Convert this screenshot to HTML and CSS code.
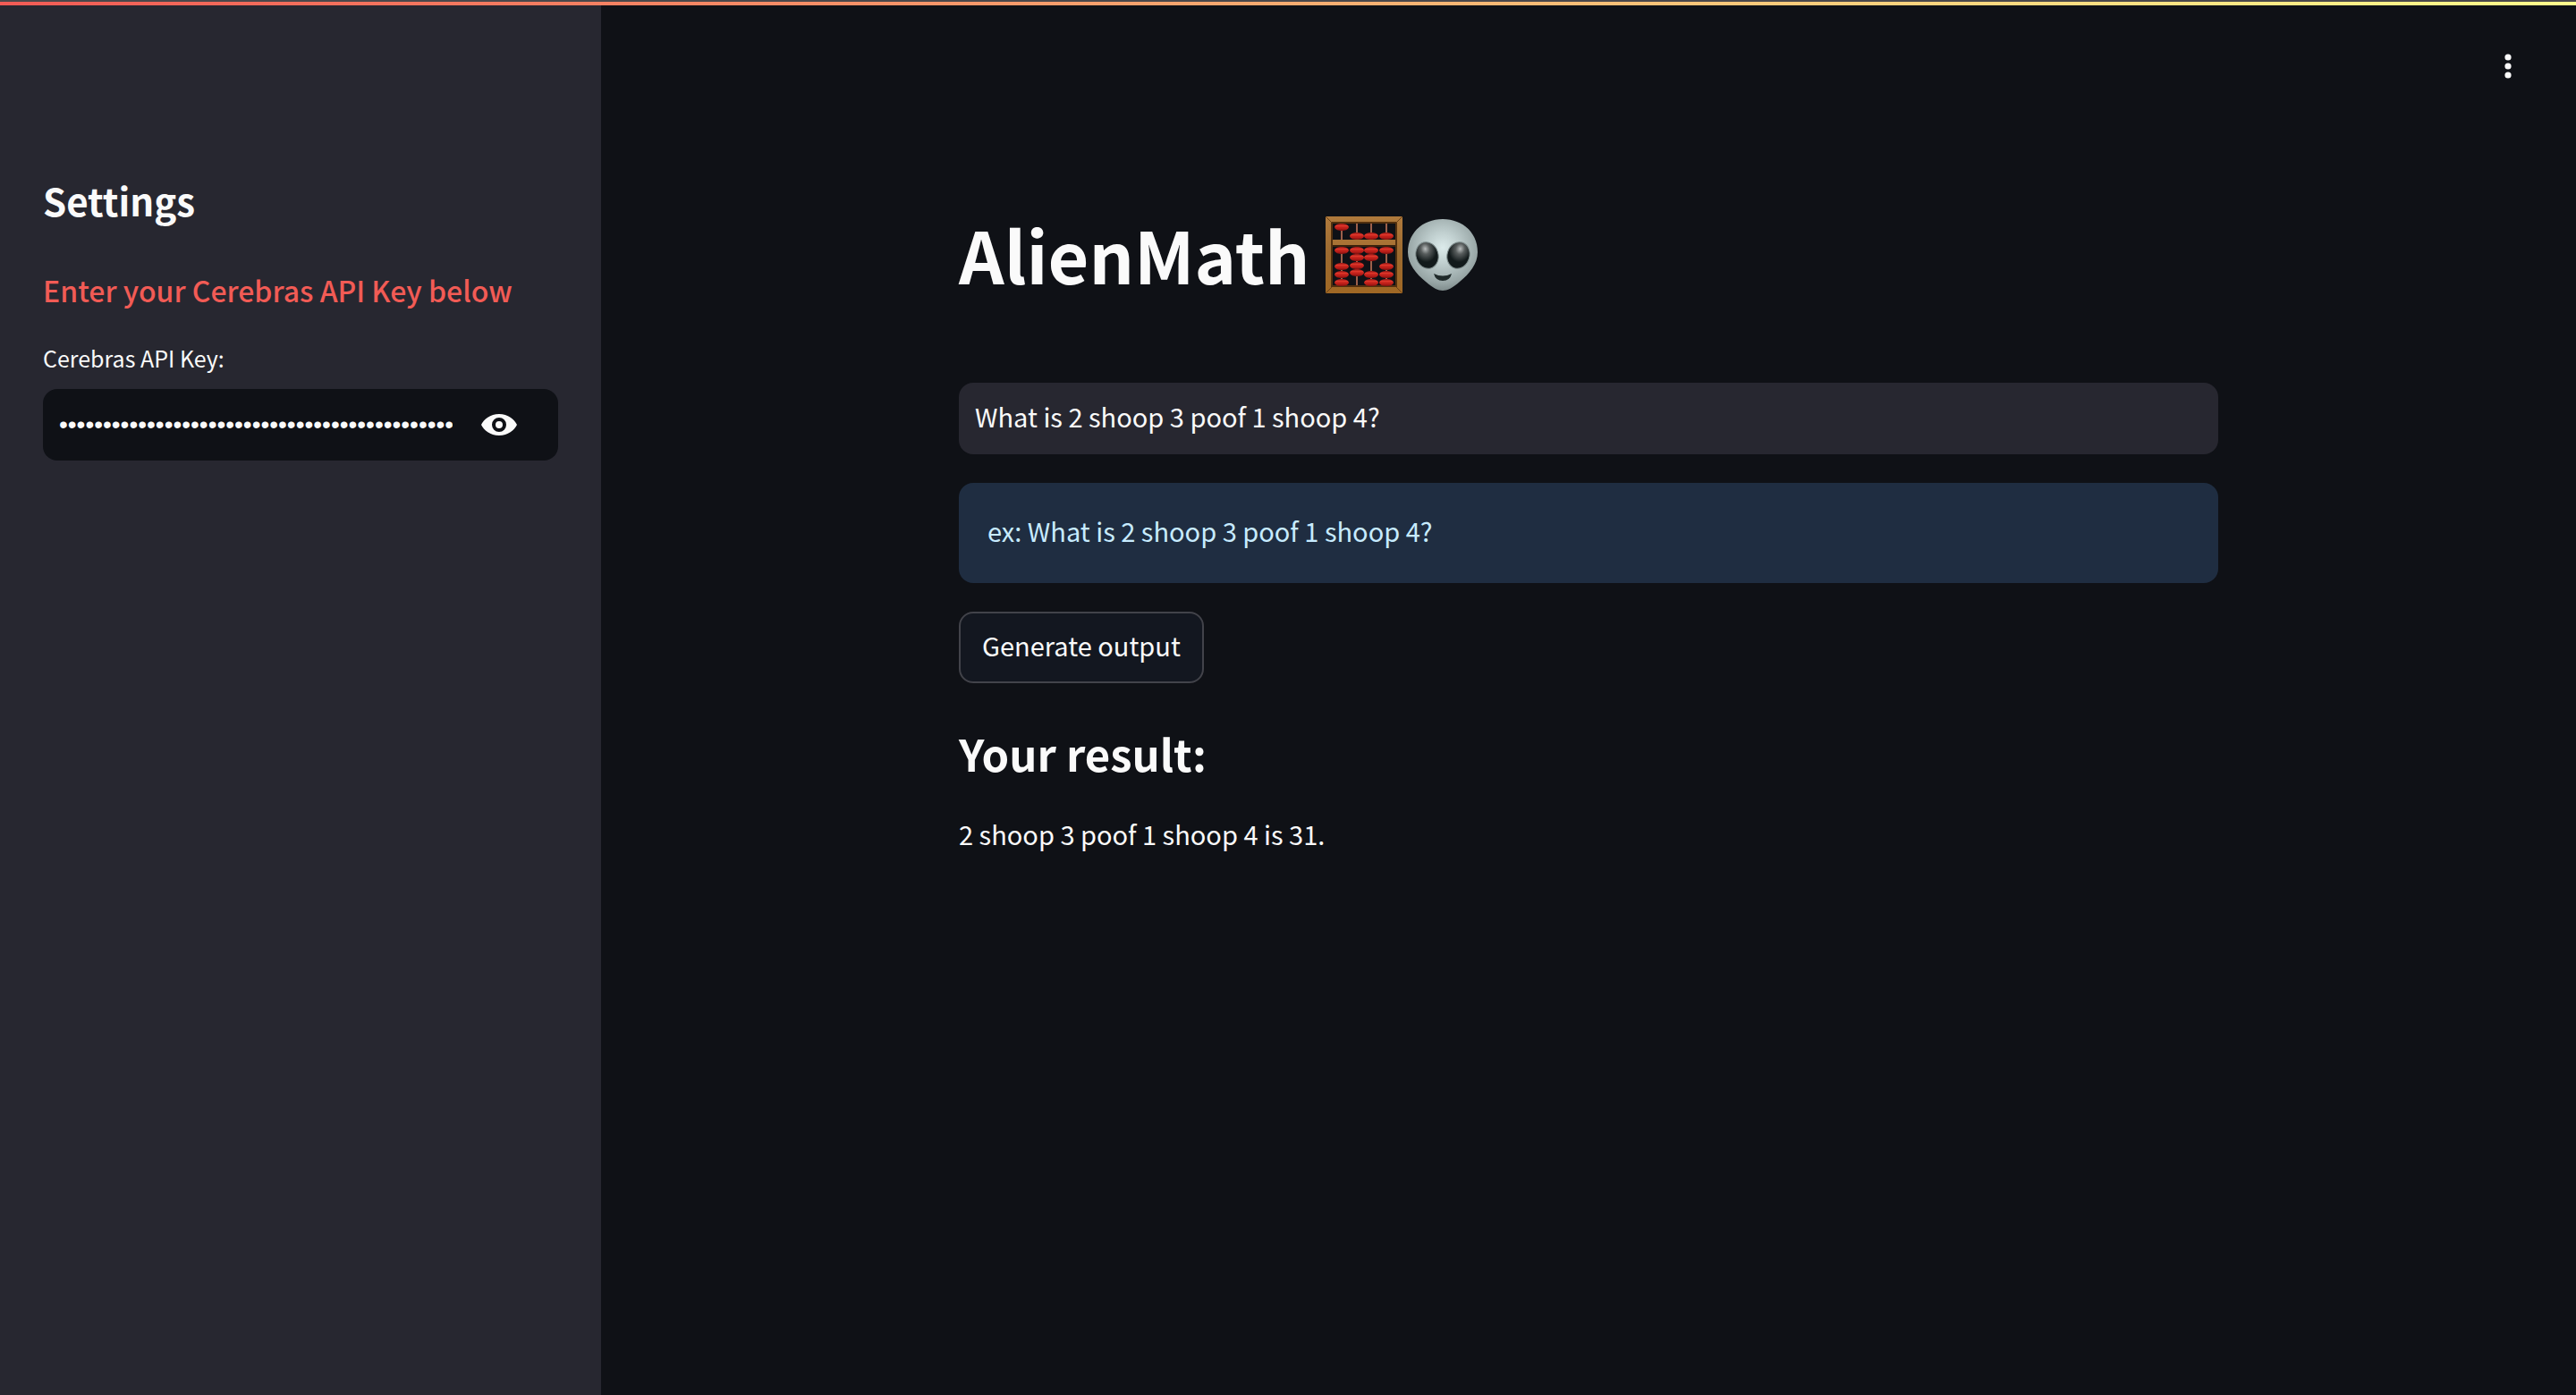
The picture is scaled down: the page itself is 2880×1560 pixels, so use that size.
FILE: index.html
```html
<!DOCTYPE html>
<html lang="en">
<head>
  <meta charset="utf-8">
  <meta name="viewport" content="width=device-width, initial-scale=1">
  <title>AlienMath</title>
  <link rel="stylesheet" href="styles.css">
</head>
<body>
  <div class="decoration"></div>
  <div class="app">
    <aside class="sidebar">
      <h2 class="sidebar-title">Settings</h2>
      <h3 class="sidebar-note">Enter your Cerebras API Key below</h3>
      <label class="label" for="api-key">Cerebras API Key:</label>
      <div class="key-field">
        <input class="key-input" id="api-key" type="password" value="0123456789012345678901234567890123456789012345678901">
        <button class="icon-button" type="button" aria-label="Show password text">
          <svg class="eye" viewBox="0 0 40 24" aria-hidden="true">
            <path fill="currentColor" fill-rule="evenodd" d="M20 0C30 0 37 6 40 12C37 18 30 24 20 24S3 18 0 12C3 6 10 0 20 0ZM20 4A8 8 0 1 0 20 20A8 8 0 1 0 20 4ZM20 8A4 4 0 1 1 20 16A4 4 0 1 1 20 8Z"/>
          </svg>
        </button>
      </div>
    </aside>
    <div class="main">
      <header class="toolbar">
        <button class="icon-button" type="button" aria-label="Main menu">
          <svg class="dots" viewBox="0 0 8 28" aria-hidden="true">
            <g fill="currentColor"><circle cx="4" cy="4" r="3.6"/><circle cx="4" cy="14" r="3.6"/><circle cx="4" cy="24" r="3.6"/></g>
          </svg>
        </button>
      </header>
      <main class="content">
        <h1 class="title">
          <span>AlienMath</span>
          <span class="emojis">
            <svg class="abacus" viewBox="0 0 86 86" role="img" aria-label="Abacus">
              <defs>
                <linearGradient id="wood" x1="0" y1="0" x2="0" y2="1">
                  <stop offset="0" stop-color="#b07a3c"/><stop offset=".5" stop-color="#9c6a30"/><stop offset="1" stop-color="#a06824"/>
                </linearGradient>
                <linearGradient id="red" x1="0" y1="0" x2="0" y2="1">
                  <stop offset="0" stop-color="#8f1512"/><stop offset=".35" stop-color="#e8392d"/><stop offset=".6" stop-color="#c9211b"/><stop offset="1" stop-color="#7e100f"/>
                </linearGradient>
                <g id="bead">
                  <path fill="url(#red)" d="M-8 0C-7-3-4-4 0-4S7-3 8 0C7 3 4 4 0 4S-7 3-8 0Z"/>
                  <path fill="none" stroke="#8f1512" stroke-width=".4" d="M-8 0H8"/>
                </g>
              </defs>
              <path fill="url(#wood)" fill-rule="evenodd" d="M0 0H86V86H0ZM8 7V78H78V7Z"/>
              <path fill="#52300f" fill-rule="evenodd" d="M6 6H80V79H6ZM8 8V77H78V8Z"/>
              <path fill="none" stroke="#6a4218" d="M0 0L7 7M86 0L79 7M0 86L7 79M86 86L79 79"/>
              <path fill="none" stroke="#9d604b" stroke-width="2" d="M18 8V26M35 8V26M51 8V26M68 8V26M18 33V77M35 33V77M51 33V77M68 33V77"/>
              <path fill="#a97335" d="M8 26H78V32H8Z"/>
              <path fill="#3a220d" d="M8 32H78V34H8Z"/>
              <use href="#bead" x="18" y="12"/><use href="#bead" x="35" y="22"/><use href="#bead" x="51" y="22"/><use href="#bead" x="68" y="22"/>
              <use href="#bead" x="18" y="38"/><use href="#bead" x="35" y="38"/><use href="#bead" x="51" y="38"/><use href="#bead" x="68" y="38"/>
              <use href="#bead" x="35" y="46"/><use href="#bead" x="51" y="46"/>
              <use href="#bead" x="18" y="56"/><use href="#bead" x="35" y="55"/><use href="#bead" x="68" y="56"/>
              <use href="#bead" x="18" y="65"/><use href="#bead" x="35" y="63"/><use href="#bead" x="51" y="65"/><use href="#bead" x="68" y="65"/>
              <use href="#bead" x="18" y="74"/><use href="#bead" x="51" y="74"/><use href="#bead" x="68" y="74"/>
            </svg>
            <svg class="alien" viewBox="0 0 78 80" role="img" aria-label="Alien">
              <defs>
                <radialGradient id="skin" cx=".5" cy=".4" r=".62">
                  <stop offset="0" stop-color="#dcebeb"/><stop offset=".35" stop-color="#c0cfcf"/><stop offset=".8" stop-color="#98a6a6"/><stop offset="1" stop-color="#7b8888"/>
                </radialGradient>
                <radialGradient id="eyeball" cx=".5" cy=".25" r=".5">
                  <stop offset="0" stop-color="#b9bdbd"/><stop offset=".4" stop-color="#585d5d"/><stop offset="1" stop-color="#121a1b"/>
                </radialGradient>
              </defs>
              <path fill="url(#skin)" d="M39 0C61 0 78 15 78 37C78 50 69 61 58 70C50 77 44 80 39 80S28 77 20 70C9 61 0 50 0 37C0 15 17 0 39 0Z"/>
              <ellipse cx="21.500" cy="40.500" rx="12.500" ry="15" fill="url(#eyeball)" stroke="#829090" transform="rotate(-16 21.500 40.500)"/>
              <ellipse cx="56.500" cy="40.500" rx="12.500" ry="15" fill="url(#eyeball)" stroke="#829090" transform="rotate(16 56.500 40.500)"/>
              <path fill="#202a2a" d="M29 61Q39 66 49 61Q47 69 39 69T29 61Z"/>
            </svg>
          </span>
        </h1>
        <input class="question" type="text" aria-label="Question" value="What is 2 shoop 3 poof 1 shoop 4?">
        <p class="alert">ex: What is 2 shoop 3 poof 1 shoop 4?</p>
        <button class="generate" type="button">Generate output</button>
        <h2 class="result-title">Your result:</h2>
        <p class="result">2 shoop 3 poof 1 shoop 4 is 31.</p>
      </main>
    </div>
  </div>
</body>
</html>
```
FILE: styles.css
```css
* {
  box-sizing: border-box;
}

body {
  margin: 0;
  background: #0f1116;
  color: #fafafa;
  font-family: "Noto Sans CJK JP", "Noto Sans", sans-serif;
  font-size: 29px;
  line-height: 48px;
}

h1,
h2,
h3,
p {
  margin: 0;
}

button,
input {
  font: inherit;
  color: inherit;
}

.decoration {
  position: fixed;
  inset: 0 0 auto;
  height: 6px;
  border-top: 2px solid #4a484b;
  background: linear-gradient(90deg, #f25b55, #fffd8c) padding-box;
}

.app {
  display: flex;
  min-height: 100vh;
}

.sidebar {
  display: flex;
  flex-direction: column;
  flex: 0 0 672px;
  padding: 196px 48px 48px;
  background: #272730;
}

.sidebar-title {
  font-size: 42px;
  font-weight: 700;
  line-height: 56px;
}

.sidebar-note {
  margin-top: 48px;
  color: #f25b55;
  font-size: 32px;
  font-weight: 500;
  line-height: 48px;
}

.label {
  margin-top: 32px;
  font-size: 25px;
  line-height: 40px;
}

.key-field {
  display: flex;
  align-items: center;
  height: 80px;
  margin-top: 15px;
  padding: 0 46px 0 18px;
  border-radius: 16px;
  background: #0f1116;
}

.key-input {
  flex: 1;
  min-width: 0;
  margin-right: 32px;
  padding: 0;
  border: 0;
  outline: 0;
  background: none;
  font-family: "Liberation Sans", sans-serif;
  font-size: 28px;
}

.icon-button {
  display: flex;
  padding: 0;
  border: 0;
  background: none;
}

.eye {
  width: 40px;
  height: 24px;
}

.dots {
  width: 8px;
  height: 28px;
}

.main {
  flex: 1;
  min-width: 0;
}

.toolbar {
  display: flex;
  justify-content: flex-end;
  height: 120px;
  padding: 60px 72px 0;
}

.content {
  display: flex;
  flex-direction: column;
  align-items: stretch;
  max-width: 1472px;
  margin: 0 auto;
  padding: 112px 32px 160px;
}

.title {
  display: flex;
  align-items: center;
  gap: 18px;
  height: 104px;
  font-size: 79px;
  font-weight: 700;
  line-height: 104px;
}

.emojis {
  display: flex;
  align-items: center;
  gap: 6px;
  padding-top: 2px;
}

.abacus {
  width: 86px;
  height: 86px;
}

.alien {
  width: 78px;
  height: 80px;
}

.question {
  height: 80px;
  margin-top: 92px;
  padding: 0 18px 6px;
  border: 0;
  border-radius: 16px;
  outline: 0;
  background: #272730;
}

.alert {
  margin-top: 32px;
  padding: 29px 32px 35px;
  border-radius: 16px;
  background: #1f2d41;
  color: #c7ebff;
}

.generate {
  align-self: flex-start;
  height: 80px;
  margin-top: 32px;
  padding: 0 24px 6px;
  border: 2px solid #42434a;
  border-radius: 16px;
  background: #131720;
}

.result-title {
  margin-top: 44px;
  font-size: 49px;
  font-weight: 700;
  line-height: 68px;
}

.result {
  margin-top: 32px;
}
```
